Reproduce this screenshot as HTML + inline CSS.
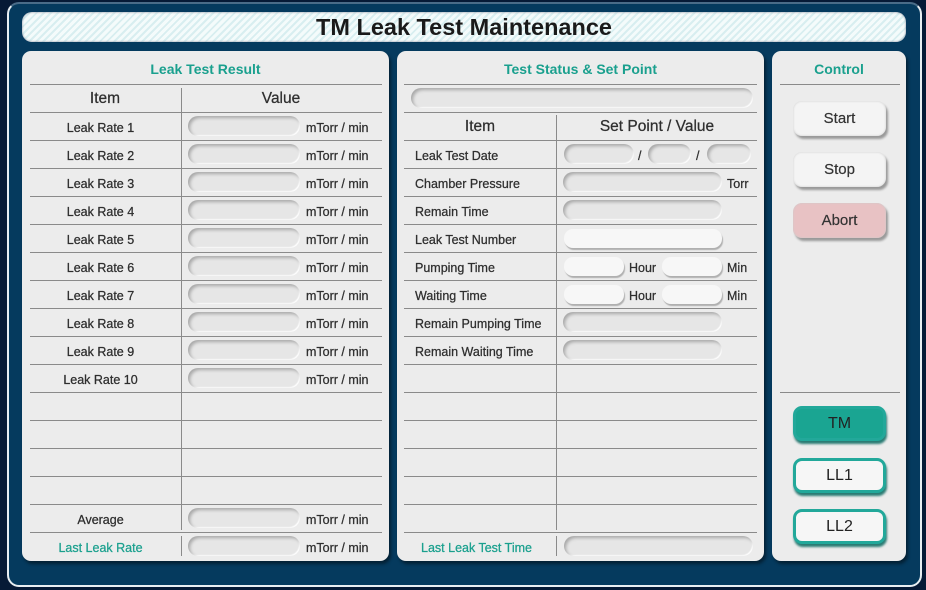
<!DOCTYPE html>
<html><head><meta charset="utf-8"><style>
*{margin:0;padding:0;box-sizing:border-box}
body{width:926px;height:590px;background:#061a36;position:relative;overflow:hidden;font-family:"Liberation Sans",sans-serif;color:#2e2e2e}
.abs{position:absolute}
#frame{left:7px;top:2px;width:915px;height:585px;background:#053a5e;border:2px solid #e8eef2;border-radius:12px;border-top-color:#4a6c88}
#title{left:22px;top:12px;width:884px;height:30px;border-radius:10px;background:repeating-linear-gradient(135deg,#d8eef0 0 2px,#f4fbfb 2px 5px);box-shadow:inset 0 0 2px #889;font-weight:bold;font-size:23.5px;text-align:center;line-height:30px;color:#1a1a1a}
.panel{background:#ececec;border-radius:9px;box-shadow:2px 3px 3px rgba(0,0,0,.45)}
.h{position:absolute;color:#1aa08e;font-weight:bold;font-size:14px;text-align:center}
.ln{position:absolute;height:1px;background:#8a8a8a}
.vl{position:absolute;width:1px;background:#8a8a8a}
.t{position:absolute;font-size:12.5px;line-height:14px;white-space:nowrap;-webkit-text-stroke:0.25px #2e2e2e;margin-top:1px}
.c{text-align:center}
.th{position:absolute;font-size:15.5px;text-align:center;-webkit-text-stroke:0.25px #2e2e2e}
.in{position:absolute;height:20px;border-radius:10px;background:#e6e6e6;box-shadow:inset 2px 2px 3px #a8a8a8,inset -1px -1px 1px #fff}
.wi{position:absolute;height:19px;border-radius:9px;background:#f7f7f7;box-shadow:1px 2px 1px #b0b0b0}
.btn{position:absolute;left:793px;width:93px;height:35px;border-radius:9px;background:#f4f4f4;box-shadow:2px 3px 2px #9a9a9a,inset 0 0 2px #ccc;font-size:15px;text-align:center;line-height:35px;color:#333;-webkit-text-stroke:0.2px #333}
.tb{position:absolute;left:793px;width:93px;height:35px;border-radius:9px;background:#f6f6f6;border:3px solid #22a89a;box-shadow:1px 3px 2px #2a7c74;font-size:16px;text-align:center;line-height:29px;color:#222}
</style></head><body>
<div id="frame" class="abs"></div>
<div id="title" class="abs">TM Leak Test Maintenance</div>

<div class="abs panel" style="left:22px;top:51px;width:367px;height:510px"></div>
<div class="abs panel" style="left:397px;top:51px;width:367px;height:510px"></div>
<div class="abs panel" style="left:772px;top:51px;width:134px;height:510px"></div>

<!-- LEFT -->
<div class="h" style="left:22px;width:367px;top:61px">Leak Test Result</div>
<div class="ln" style="left:30px;width:352px;top:84px"></div>
<div class="th" style="left:30px;width:150px;top:90px">Item</div>
<div class="th" style="left:181px;width:200px;top:90px">Value</div>
<div class="vl" style="left:181px;top:88px;height:442px"></div>
<div class="vl" style="left:181px;top:536px;height:20px"></div>
<div class="ln" style="left:30px;width:352px;top:112px"></div>
<div class="ln" style="left:30px;width:352px;top:140px"></div>
<div class="ln" style="left:30px;width:352px;top:168px"></div>
<div class="ln" style="left:30px;width:352px;top:196px"></div>
<div class="ln" style="left:30px;width:352px;top:224px"></div>
<div class="ln" style="left:30px;width:352px;top:252px"></div>
<div class="ln" style="left:30px;width:352px;top:280px"></div>
<div class="ln" style="left:30px;width:352px;top:308px"></div>
<div class="ln" style="left:30px;width:352px;top:336px"></div>
<div class="ln" style="left:30px;width:352px;top:364px"></div>
<div class="ln" style="left:30px;width:352px;top:392px"></div>
<div class="ln" style="left:30px;width:352px;top:420px"></div>
<div class="ln" style="left:30px;width:352px;top:448px"></div>
<div class="ln" style="left:30px;width:352px;top:476px"></div>
<div class="ln" style="left:30px;width:352px;top:504px"></div>
<div class="ln" style="left:30px;width:352px;top:532px"></div>

<div class="t c" style="left:30px;width:141px;top:120px">Leak Rate 1</div>
<div class="t c" style="left:30px;width:141px;top:148px">Leak Rate 2</div>
<div class="t c" style="left:30px;width:141px;top:176px">Leak Rate 3</div>
<div class="t c" style="left:30px;width:141px;top:204px">Leak Rate 4</div>
<div class="t c" style="left:30px;width:141px;top:232px">Leak Rate 5</div>
<div class="t c" style="left:30px;width:141px;top:260px">Leak Rate 6</div>
<div class="t c" style="left:30px;width:141px;top:288px">Leak Rate 7</div>
<div class="t c" style="left:30px;width:141px;top:316px">Leak Rate 8</div>
<div class="t c" style="left:30px;width:141px;top:344px">Leak Rate 9</div>
<div class="t c" style="left:30px;width:141px;top:372px">Leak Rate 10</div>
<div class="t c" style="left:30px;width:141px;top:512px">Average</div>
<div class="t c" style="left:30px;width:141px;top:540px;color:#1aa08e;-webkit-text-stroke:0.25px #1aa08e">Last Leak Rate</div>

<div class="in" style="left:188px;width:112px;top:116px"></div><div class="t" style="left:306px;top:120px">mTorr / min</div>
<div class="in" style="left:188px;width:112px;top:144px"></div><div class="t" style="left:306px;top:148px">mTorr / min</div>
<div class="in" style="left:188px;width:112px;top:172px"></div><div class="t" style="left:306px;top:176px">mTorr / min</div>
<div class="in" style="left:188px;width:112px;top:200px"></div><div class="t" style="left:306px;top:204px">mTorr / min</div>
<div class="in" style="left:188px;width:112px;top:228px"></div><div class="t" style="left:306px;top:232px">mTorr / min</div>
<div class="in" style="left:188px;width:112px;top:256px"></div><div class="t" style="left:306px;top:260px">mTorr / min</div>
<div class="in" style="left:188px;width:112px;top:284px"></div><div class="t" style="left:306px;top:288px">mTorr / min</div>
<div class="in" style="left:188px;width:112px;top:312px"></div><div class="t" style="left:306px;top:316px">mTorr / min</div>
<div class="in" style="left:188px;width:112px;top:340px"></div><div class="t" style="left:306px;top:344px">mTorr / min</div>
<div class="in" style="left:188px;width:112px;top:368px"></div><div class="t" style="left:306px;top:372px">mTorr / min</div>
<div class="in" style="left:188px;width:112px;top:508px"></div><div class="t" style="left:306px;top:512px">mTorr / min</div>
<div class="in" style="left:188px;width:112px;top:536px"></div><div class="t" style="left:306px;top:540px">mTorr / min</div>

<!-- MIDDLE -->
<div class="h" style="left:397px;width:367px;top:61px">Test Status &amp; Set Point</div>
<div class="ln" style="left:404px;width:353px;top:84px"></div>
<div class="in" style="left:411px;width:342px;top:88px"></div>
<div class="ln" style="left:404px;width:353px;top:112px"></div>
<div class="th" style="left:404px;width:152px;top:118px">Item</div>
<div class="th" style="left:557px;width:200px;top:118px">Set Point / Value</div>
<div class="vl" style="left:556px;top:115px;height:415px"></div>
<div class="vl" style="left:556px;top:536px;height:20px"></div>
<div class="ln" style="left:404px;width:353px;top:140px"></div>
<div class="ln" style="left:404px;width:353px;top:168px"></div>
<div class="ln" style="left:404px;width:353px;top:196px"></div>
<div class="ln" style="left:404px;width:353px;top:224px"></div>
<div class="ln" style="left:404px;width:353px;top:252px"></div>
<div class="ln" style="left:404px;width:353px;top:280px"></div>
<div class="ln" style="left:404px;width:353px;top:308px"></div>
<div class="ln" style="left:404px;width:353px;top:336px"></div>
<div class="ln" style="left:404px;width:353px;top:364px"></div>
<div class="ln" style="left:404px;width:353px;top:392px"></div>
<div class="ln" style="left:404px;width:353px;top:420px"></div>
<div class="ln" style="left:404px;width:353px;top:448px"></div>
<div class="ln" style="left:404px;width:353px;top:476px"></div>
<div class="ln" style="left:404px;width:353px;top:504px"></div>
<div class="ln" style="left:404px;width:353px;top:532px"></div>

<div class="t" style="left:415px;top:148px">Leak Test Date</div>
<div class="t" style="left:415px;top:176px">Chamber Pressure</div>
<div class="t" style="left:415px;top:204px">Remain Time</div>
<div class="t" style="left:415px;top:232px">Leak Test Number</div>
<div class="t" style="left:415px;top:260px">Pumping Time</div>
<div class="t" style="left:415px;top:288px">Waiting Time</div>
<div class="t" style="left:415px;top:316px">Remain Pumping Time</div>
<div class="t" style="left:415px;top:344px">Remain Waiting Time</div>
<div class="t c" style="left:404px;width:145px;top:540px;color:#1aa08e;-webkit-text-stroke:0.25px #1aa08e">Last Leak Test Time</div>

<div class="in" style="left:564px;width:70px;top:144px"></div>
<div class="t" style="left:638px;top:148px">/</div>
<div class="in" style="left:648px;width:43px;top:144px"></div>
<div class="t" style="left:696px;top:148px">/</div>
<div class="in" style="left:707px;width:44px;top:144px"></div>
<div class="in" style="left:563px;width:159px;top:172px"></div><div class="t" style="left:727px;top:176px">Torr</div>
<div class="in" style="left:563px;width:159px;top:200px"></div>
<div class="wi" style="left:564px;width:158px;top:229px"></div>
<div class="wi" style="left:564px;width:60px;top:257px"></div><div class="t" style="left:629px;top:260px">Hour</div>
<div class="wi" style="left:662px;width:60px;top:257px"></div><div class="t" style="left:727px;top:260px">Min</div>
<div class="wi" style="left:564px;width:60px;top:285px"></div><div class="t" style="left:629px;top:288px">Hour</div>
<div class="wi" style="left:662px;width:60px;top:285px"></div><div class="t" style="left:727px;top:288px">Min</div>
<div class="in" style="left:563px;width:159px;top:312px"></div>
<div class="in" style="left:563px;width:159px;top:340px"></div>
<div class="in" style="left:564px;width:189px;top:536px"></div>

<!-- RIGHT -->
<div class="h" style="left:772px;width:134px;top:61px">Control</div>
<div class="ln" style="left:780px;width:120px;top:84px"></div>
<div class="btn" style="top:101px">Start</div>
<div class="btn" style="top:152px">Stop</div>
<div class="btn" style="top:203px;background:#e8c2c4">Abort</div>
<div class="ln" style="left:780px;width:120px;top:392px"></div>
<div class="tb" style="top:406px;background:#1aa592">TM</div>
<div class="tb" style="top:458px">LL1</div>
<div class="tb" style="top:509px">LL2</div>
</body></html>
